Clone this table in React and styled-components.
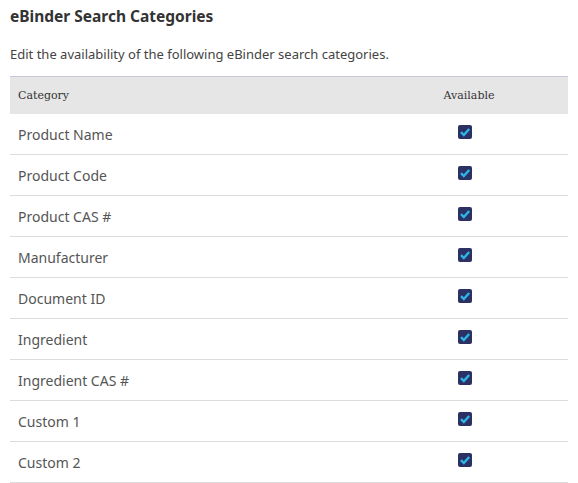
import React from "react";
import styled, { createGlobalStyle } from "styled-components";

const Global = createGlobalStyle`
  body {
    margin: 0;
    background: #fff;
    font-family: "Noto Sans", "Open Sans", sans-serif;
  }
`;

const Page = styled.div`
  padding: 5px 10px 0 10px;
  width: 558px;
`;

const Title = styled.h2`
  margin: 0;
  font-size: 15.5px;
  line-height: 22px;
  font-weight: 700;
  color: #333;
`;

const Intro = styled.p`
  margin: 17px 0 0 0;
  font-size: 13px;
  line-height: 20px;
  color: #444;
`;

const Table = styled.table`
  width: 100%;
  margin-top: 12px;
  border-collapse: collapse;
`;

const HeadCell = styled.th`
  height: 37px;
  padding: 0 8px;
  background: #e6e6e6;
  border-top: 1px solid #c9c5dd;
  font-family: "DejaVu Serif", "Liberation Serif", serif;
  font-size: 11px;
  font-weight: 400;
  color: #333;
  text-align: ${(p) => (p.center ? "center" : "left")};
  width: ${(p) => p.w || "auto"};
`;

const Row = styled.tr`
  border-bottom: 1px solid #dcdcdc;
`;

const Cell = styled.td`
  height: 40px;
  padding: 0 8px;
  font-size: 14px;
  color: #555;
  text-align: ${(p) => (p.center ? "center" : "left")};
  vertical-align: middle;
`;

const Box = styled.span`
  display: inline-flex;
  align-items: center;
  justify-content: center;
  width: 14px;
  height: 14px;
  margin-right: 8px;
  border-radius: 2px;
  background: #2b3163;
  position: relative;
  top: -2px;
`;

const Check = () => (
  <Box>
    <svg width="12" height="12" viewBox="0 0 12 12">
      <path d="M2 6.2 L4.8 9 L10.2 3" fill="none" stroke="#2cb5e6" strokeWidth="2.4" />
    </svg>
  </Box>
);

const categories = [
  "Product Name",
  "Product Code",
  "Product CAS #",
  "Manufacturer",
  "Document ID",
  "Ingredient",
  "Ingredient CAS #",
  "Custom 1",
  "Custom 2",
];

export default function App() {
  return (
    <Page>
      <Global />
      <Title>eBinder Search Categories</Title>
      <Intro>Edit the availability of the following eBinder search categories.</Intro>
      <Table>
        <thead>
          <tr>
            <HeadCell>Category</HeadCell>
            <HeadCell center w="182px">Available</HeadCell>
          </tr>
        </thead>
        <tbody>
          {categories.map((c) => (
            <Row key={c}>
              <Cell>{c}</Cell>
              <Cell center>
                <Check />
              </Cell>
            </Row>
          ))}
        </tbody>
      </Table>
    </Page>
  );
}
